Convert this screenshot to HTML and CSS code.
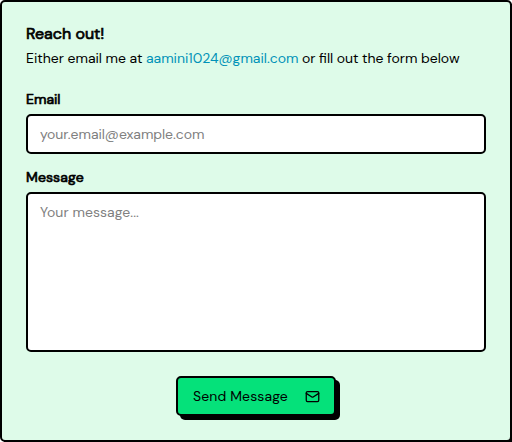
FILE: index.html
```html
<!DOCTYPE html>
<html lang="en">
<head>
<meta charset="utf-8">
<title>Reach out</title>
<link rel="stylesheet" href="styles.css">
</head>
<body>
<main class="card">
  <header class="intro">
    <h1 class="title">Reach out!</h1>
    <p class="lead">Either email me at <a class="link" href="mailto:aamini1024@gmail.com">aamini1024@gmail.com</a> or fill out the form below</p>
  </header>
  <form class="form">
    <label class="label" for="email">Email</label>
    <input class="field" id="email" type="email" placeholder="your.email@example.com">
    <label class="label label-message" for="message">Message</label>
    <textarea class="field area" id="message" placeholder="Your message..."></textarea>
    <button class="send" type="button">
      <span class="send-text">Send Message</span>
      <svg class="icon" viewBox="0 0 24 24" fill="none" stroke="currentColor" stroke-width="2" stroke-linecap="round" stroke-linejoin="round"><rect width="20" height="16" x="2" y="4" rx="2"/><path d="m22 7-8.97 5.7a1.94 1.94 0 0 1-2.06 0L2 7"/></svg>
    </button>
  </form>
</main>
</body>
</html>
```
FILE: styles.css
```css
* { box-sizing: border-box; }
html { overflow: hidden; background: #fff; }
body {
  margin: 0;
  font: 400 14px/20px "DM Sans", Inter, sans-serif;
  color: #000;
}
.card {
  width: 512px;
  height: 442px;
  padding: 22px 24px 24px;
  border: 2px solid #000;
  border-radius: 5px;
  background: #defbe9;
  box-shadow: 4px 4px 0 #000;
}
.title {
  margin: 0;
  font-size: 16px;
  line-height: 20px;
  font-weight: 400;
  -webkit-text-stroke: 0.7px #000;
}
.lead { margin: 4px 0 0; white-space: nowrap; word-spacing: -0.2px; }
.link { color: #0092b8; text-decoration: none; }
.form { display: flex; flex-direction: column; margin-top: 24px; }
.label {
  line-height: 14px;
  -webkit-text-stroke: 0.7px #000;
}
.label-message { margin-top: 16px; letter-spacing: 0.12px; }
.field {
  display: block;
  width: 100%;
  height: 40px;
  margin: 8px 0 0;
  padding: 8px 12px;
  border: 2px solid #000;
  border-radius: 5px;
  background: #fff;
  font: inherit;
  letter-spacing: -0.05px;
  outline: none;
  resize: none;
}
.field::placeholder { color: #808080; opacity: 1; }
.area { height: 160px; letter-spacing: 0.05px; }
.send {
  display: flex;
  align-items: center;
  justify-content: space-between;
  align-self: center;
  width: 160px;
  height: 40px;
  margin: 24px 0 0;
  padding: 0 14.5px 0 15px;
  border: 2px solid #000;
  border-radius: 5px;
  background: #05e17a;
  box-shadow: 4px 4px 0 #000;
  font: inherit;
  color: #000;
}
.send-text { letter-spacing: 0.12px; }
.icon { width: 15px; height: 15px; }
```
